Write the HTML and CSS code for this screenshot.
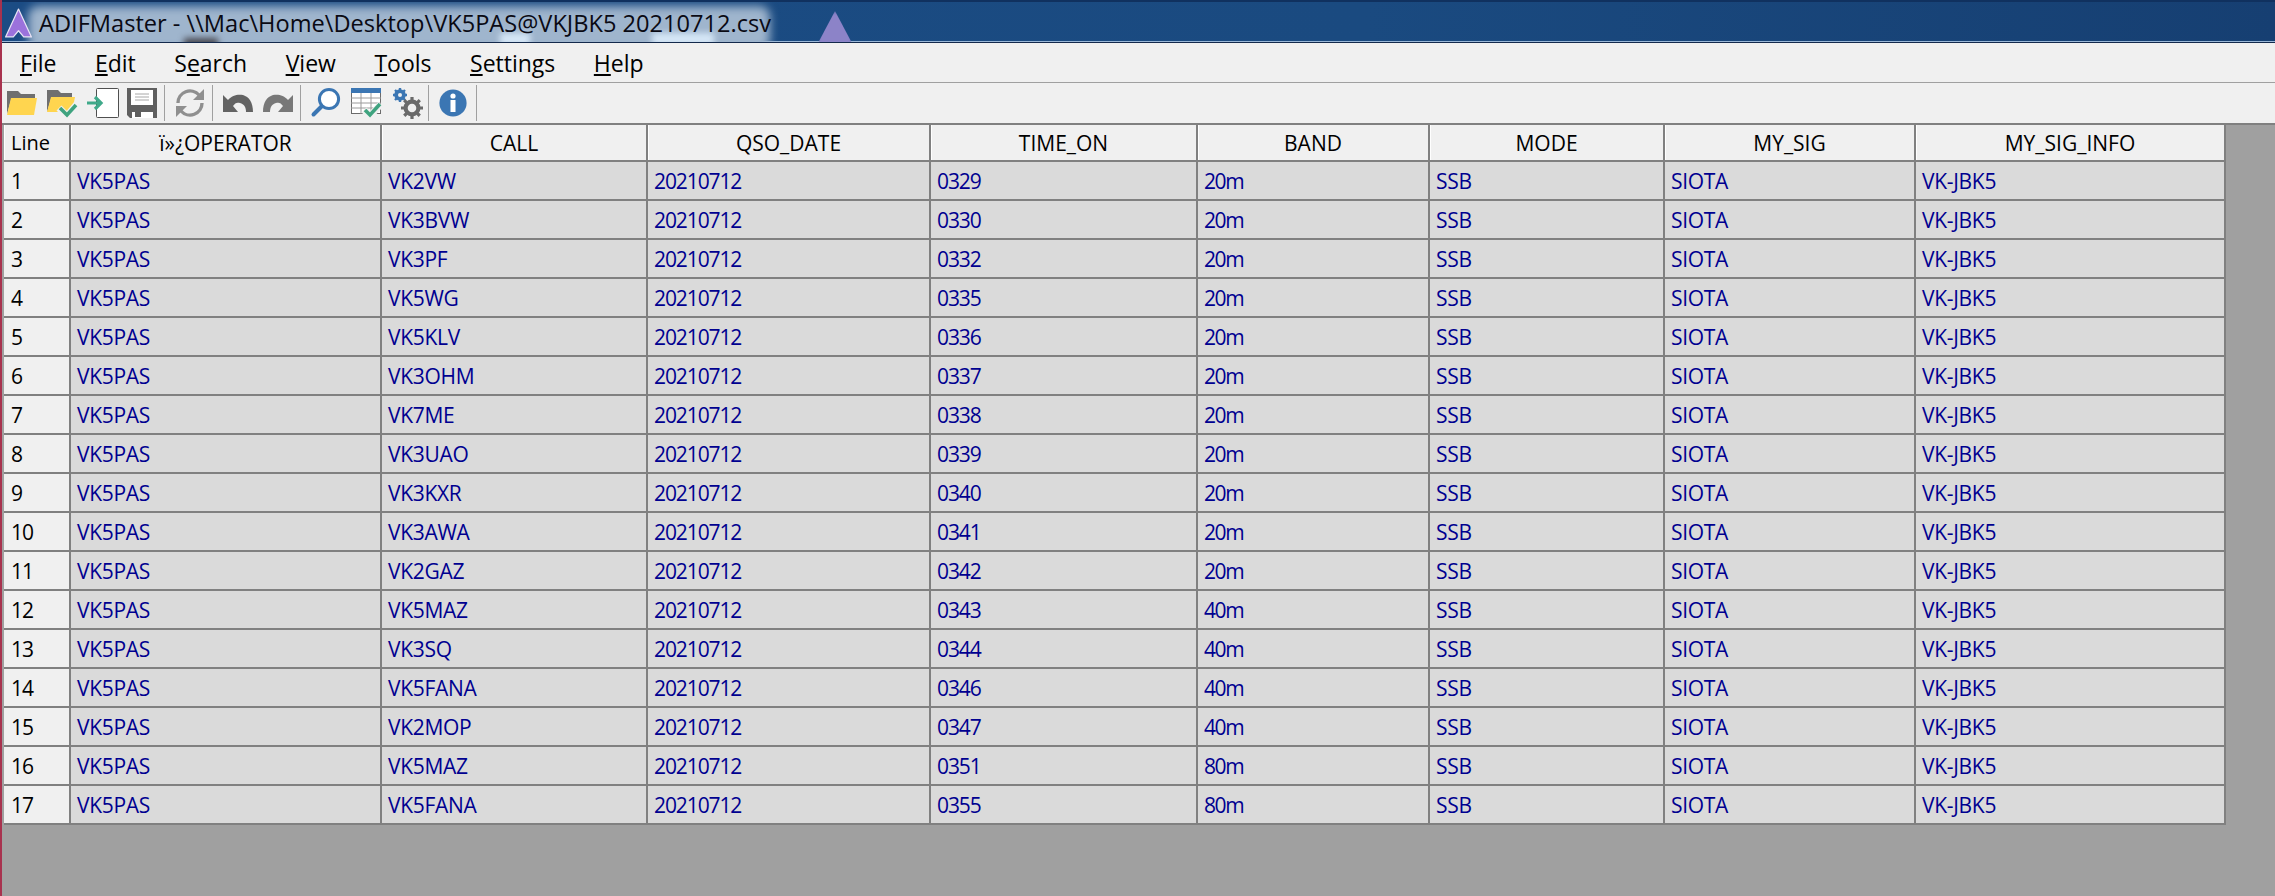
FILE: index.html
```html
<!DOCTYPE html>
<html lang="en">
<head>
<meta charset="utf-8">
<title>ADIFMaster</title>
<link rel="stylesheet" href="styles.css">
</head>
<body>
<div class="window">
  <header class="titlebar">
    <span class="glow"></span>
    <span class="ghost-peak"></span>
    <span class="highlight hl-a"></span>
    <span class="highlight hl-b"></span>
    <span class="highlight hl-c"></span>
    <svg class="app-icon" width="27" height="30" viewBox="0 0 26 29"><path d="M13 1 L25.5 28 L18 28 L13 22 L8 28 L.5 28 Z" fill="#9b72dc" stroke="#e8e4f4" stroke-width="1.2" stroke-linejoin="round"/></svg>
    <span class="title-text">ADIFMaster - \\Mac\Home\Desktop\VK5PAS@VKJBK5 20210712.csv</span>
  </header>
  <nav class="menubar">
    <span class="menu-item"><u>F</u>ile</span>
    <span class="menu-item"><u>E</u>dit</span>
    <span class="menu-item">S<u>e</u>arch</span>
    <span class="menu-item"><u>V</u>iew</span>
    <span class="menu-item"><u>T</u>ools</span>
    <span class="menu-item"><u>S</u>ettings</span>
    <span class="menu-item"><u>H</u>elp</span>
  </nav>
  <div class="toolbar">
    <svg class="tool" width="30" height="30" viewBox="0 0 30 30"><path d="M0 26V3h11l3 3h14v6H4z" fill="#6f6f6f"/><path d="M4 10h26l-3 17H0z" fill="#ffd54f"/></svg>
    <svg class="tool" width="30" height="30" viewBox="0 0 30 30"><path d="M0 24V2h11l3 3h11v6H4z" fill="#6f6f6f"/><path d="M4 9h24l-3 15H0z" fill="#ffd54f"/><path d="M12 20l8 8 10-12" fill="none" stroke="#f0f0f0" stroke-width="7"/><path d="M13 20l7 7 9-10" fill="none" stroke="#3fa37f" stroke-width="3.6"/></svg>
    <svg class="tool" width="30" height="30" viewBox="0 0 30 30"><rect x="9.5" y=".5" width="22" height="29" rx="1" fill="#fff" stroke="#4f4f4f"/><path d="M0 15h13M8 9l6 6-6 6" fill="none" stroke="#3fa98a" stroke-width="3.2"/></svg>
    <svg class="tool" width="30" height="30" viewBox="0 0 30 30"><path d="M0 0h30v30H3l-3-3z" fill="#5f5f5f"/><rect x="4" y="2" width="22" height="15" fill="#fff"/><path d="M8 6h14M8 9h14M8 12h14" stroke="#a8a8a8"/><rect x="5" y="24" width="21" height="6" fill="#fff"/><rect x="8" y="24" width="6" height="5" fill="#5f5f5f"/></svg>
    <span class="sep"></span>
    <svg class="tool" width="30" height="30" viewBox="0 0 30 30"><g fill="none" stroke="#8f8f8f" stroke-width="3.4"><path d="M3 15A12 12 0 0 1 24 7"/><path d="M27 15A12 12 0 0 1 6 23"/></g><path d="M29 1v11H18z" fill="#8f8f8f"/><path d="M1 29V18h11z" fill="#8f8f8f"/></svg>
    <span class="sep"></span>
    <svg class="tool" width="30" height="30" viewBox="0 0 30 30"><path d="M0 7l5 5C9 7 15 6 20 7c6 2 10 7 10 17h-7c0-5-2-8-6-9-3-1-5 0-7 3l5 6H0z" fill="#636363"/></svg>
    <svg class="tool" width="30" height="30" viewBox="0 0 30 30"><path d="M30 7l-5 5c-4-5-10-6-15-5C4 9 0 14 0 24h7c0-5 2-8 6-9 3-1 5 0 7 3l-5 6h15z" fill="#787878"/></svg>
    <span class="sep"></span>
    <svg class="tool" width="30" height="30" viewBox="0 0 30 30"><circle cx="18" cy="11" r="9.6" fill="#fff" stroke="#3b76b3" stroke-width="3"/><path d="M10.5 18.5L2.5 26.5" stroke="#3b76b3" stroke-width="4" stroke-linecap="round"/></svg>
    <svg class="tool" width="30" height="30" viewBox="0 0 30 30"><rect x=".5" y=".5" width="29" height="25" fill="#fff" stroke="#6b6b6b"/><rect width="30" height="5" fill="#3b76b3"/><path d="M0 10h30M0 15h30M0 20h30M10 5v21M20 5v21" stroke="#9a9a9a"/><path d="M13 22l6 6 11-12" fill="none" stroke="#f0f0f0" stroke-width="7"/><path d="M14 22l5 5 10-11" fill="none" stroke="#3fa37f" stroke-width="3.6"/></svg>
    <svg class="tool" width="30" height="30" viewBox="0 0 30 30"><g stroke="#3b76b3"><circle cx="9" cy="7" r="4.2" fill="none" stroke-width="3.2"/><path d="M9 0v14M2 7h14M4 2l10 10M14 2L4 12" stroke-width="2.4"/></g><circle cx="9" cy="7" r="2" fill="#f0f0f0"/><g stroke="#6a6a6a"><circle cx="21" cy="20" r="6.4" fill="none" stroke-width="4.2"/><path d="M21 9v22M10 20h22M13.2 12.2l15.6 15.6M28.8 12.2L13.2 27.8" stroke-width="3.2" stroke-dasharray="3.5 15"/></g></svg>
    <span class="sep"></span>
    <svg class="tool" width="30" height="30" viewBox="0 0 30 30"><circle cx="14" cy="15" r="13.6" fill="#3b76b3"/><circle cx="14" cy="8" r="2.6" fill="#fff"/><rect x="11.5" y="12" width="5" height="12" fill="#fff"/></svg>
    <span class="sep"></span>
  </div>
  <main class="grid-area">
    <table class="grid">
      <colgroup>
        <col class="c0"><col class="c1"><col class="c2"><col class="c3"><col class="c4"><col class="c5"><col class="c6"><col class="c7"><col class="c8">
      </colgroup>
      <thead>
        <tr><th class="line-head">Line</th><th>ï»¿OPERATOR</th><th>CALL</th><th>QSO_DATE</th><th>TIME_ON</th><th>BAND</th><th>MODE</th><th>MY_SIG</th><th>MY_SIG_INFO</th></tr>
      </thead>
      <tbody>
        <tr><th>1</th><td>VK5PAS</td><td>VK2VW</td><td class="num">20210712</td><td class="num">0329</td><td class="band">20m</td><td>SSB</td><td>SIOTA</td><td>VK-JBK5</td></tr>
        <tr><th>2</th><td>VK5PAS</td><td>VK3BVW</td><td class="num">20210712</td><td class="num">0330</td><td class="band">20m</td><td>SSB</td><td>SIOTA</td><td>VK-JBK5</td></tr>
        <tr><th>3</th><td>VK5PAS</td><td>VK3PF</td><td class="num">20210712</td><td class="num">0332</td><td class="band">20m</td><td>SSB</td><td>SIOTA</td><td>VK-JBK5</td></tr>
        <tr><th>4</th><td>VK5PAS</td><td>VK5WG</td><td class="num">20210712</td><td class="num">0335</td><td class="band">20m</td><td>SSB</td><td>SIOTA</td><td>VK-JBK5</td></tr>
        <tr><th>5</th><td>VK5PAS</td><td>VK5KLV</td><td class="num">20210712</td><td class="num">0336</td><td class="band">20m</td><td>SSB</td><td>SIOTA</td><td>VK-JBK5</td></tr>
        <tr><th>6</th><td>VK5PAS</td><td>VK3OHM</td><td class="num">20210712</td><td class="num">0337</td><td class="band">20m</td><td>SSB</td><td>SIOTA</td><td>VK-JBK5</td></tr>
        <tr><th>7</th><td>VK5PAS</td><td>VK7ME</td><td class="num">20210712</td><td class="num">0338</td><td class="band">20m</td><td>SSB</td><td>SIOTA</td><td>VK-JBK5</td></tr>
        <tr><th>8</th><td>VK5PAS</td><td>VK3UAO</td><td class="num">20210712</td><td class="num">0339</td><td class="band">20m</td><td>SSB</td><td>SIOTA</td><td>VK-JBK5</td></tr>
        <tr><th>9</th><td>VK5PAS</td><td>VK3KXR</td><td class="num">20210712</td><td class="num">0340</td><td class="band">20m</td><td>SSB</td><td>SIOTA</td><td>VK-JBK5</td></tr>
        <tr><th>10</th><td>VK5PAS</td><td>VK3AWA</td><td class="num">20210712</td><td class="num">0341</td><td class="band">20m</td><td>SSB</td><td>SIOTA</td><td>VK-JBK5</td></tr>
        <tr><th>11</th><td>VK5PAS</td><td>VK2GAZ</td><td class="num">20210712</td><td class="num">0342</td><td class="band">20m</td><td>SSB</td><td>SIOTA</td><td>VK-JBK5</td></tr>
        <tr><th>12</th><td>VK5PAS</td><td>VK5MAZ</td><td class="num">20210712</td><td class="num">0343</td><td class="band">40m</td><td>SSB</td><td>SIOTA</td><td>VK-JBK5</td></tr>
        <tr><th>13</th><td>VK5PAS</td><td>VK3SQ</td><td class="num">20210712</td><td class="num">0344</td><td class="band">40m</td><td>SSB</td><td>SIOTA</td><td>VK-JBK5</td></tr>
        <tr><th>14</th><td>VK5PAS</td><td>VK5FANA</td><td class="num">20210712</td><td class="num">0346</td><td class="band">40m</td><td>SSB</td><td>SIOTA</td><td>VK-JBK5</td></tr>
        <tr><th>15</th><td>VK5PAS</td><td>VK2MOP</td><td class="num">20210712</td><td class="num">0347</td><td class="band">40m</td><td>SSB</td><td>SIOTA</td><td>VK-JBK5</td></tr>
        <tr><th>16</th><td>VK5PAS</td><td>VK5MAZ</td><td class="num">20210712</td><td class="num">0351</td><td class="band">80m</td><td>SSB</td><td>SIOTA</td><td>VK-JBK5</td></tr>
        <tr><th>17</th><td>VK5PAS</td><td>VK5FANA</td><td class="num">20210712</td><td class="num">0355</td><td class="band">80m</td><td>SSB</td><td>SIOTA</td><td>VK-JBK5</td></tr>
      </tbody>
    </table>
  </main>
</div>
</body>
</html>
```
FILE: styles.css
```css
* { box-sizing: border-box; }
html, body { margin: 0; height: 100%; overflow: hidden; }
body { font-family: "Open Sans", "Noto Sans", sans-serif; background: #a0a0a0; color: #000; }
.window { height: 896px; display: flex; flex-direction: column; border-left: 2px solid #a8324e; }
.titlebar { position: relative; height: 43px; flex: none; display: flex; align-items: center; gap: 7px; padding: 2px 0 0 3px; overflow: hidden;
  background: linear-gradient(90deg, #1b4c84, #1a4a80 60%, #163f72);
  border-top: 2px solid #10315f; border-bottom: 1px solid #13294c; box-shadow: inset 0 -1px 0 #9ab8d8; }
.glow { position: absolute; left: 26px; top: 4px; width: 742px; height: 44px; background: #9fb5cd; filter: blur(5px); border-radius: 10px; }
.ghost-peak { position: absolute; left: 815px; top: 9px; width: 36px; height: 34px; background: #8c83c8; clip-path: polygon(50% 0, 100% 100%, 0 100%); filter: blur(2px); }
.highlight { position: absolute; top: 31px; height: 12px; background: #d6e7f7; filter: blur(3px); }
.hl-a { left: 650px; width: 62px; }
.hl-b { left: 182px; width: 34px; top: 36px; background: #4a4a52; }
.hl-c { left: 498px; width: 30px; }
.app-icon { position: relative; flex: none; }
.title-text { position: relative; font-size: 23.6px; color: #0a0a14; white-space: nowrap; }
.menubar { height: 40px; flex: none; display: flex; align-items: center; gap: 38.5px; padding-left: 18px; background: #f0f0f0; border-bottom: 1px solid #a0a0a0; font-size: 23px; }
.menu-item { white-space: nowrap; }
.toolbar { height: 42px; flex: none; display: flex; align-items: center; padding-left: 5px; background: #f0f0f0; border-bottom: 2px solid #808080; }
.tool { flex: none; margin-right: 10px; overflow: visible; }
.sep { width: 1px; height: 36px; margin: 0 10px 0 -3px; background: #a0a0a0; flex: none; }
.grid-area { flex: 1; padding-left: 2px; }
.grid { border-collapse: separate; border-spacing: 0; table-layout: fixed; width: 2222px; font-size: 21px; }
.c0 { width: 67px; } .c1 { width: 311px; } .c2 { width: 266px; } .c3 { width: 283px; } .c4 { width: 267px; } .c5 { width: 232px; } .c6 { width: 235px; } .c7 { width: 251px; } .c8 { width: 310px; }
.grid th, .grid td { height: 39px; padding: 0 6px 0 6px; border-right: 2px solid #808080; border-bottom: 2px solid #808080; white-space: nowrap; overflow: hidden; font-weight: 400; }
.grid thead th { height: 37px; text-align: center; background: #f0f0f0; box-shadow: inset 1px 0 0 #fff; }
.grid thead .line-head { text-align: left; font-size: 20px; padding-left: 7px; }
.grid tbody th { text-align: left; background: #f0f0f0; letter-spacing: -1px; padding-left: 7px; }
.grid td { background: #dadada; color: #000090; letter-spacing: -0.3px; }
.grid .num { letter-spacing: -1.1px; }
.grid .band { letter-spacing: -1.4px; }
```
